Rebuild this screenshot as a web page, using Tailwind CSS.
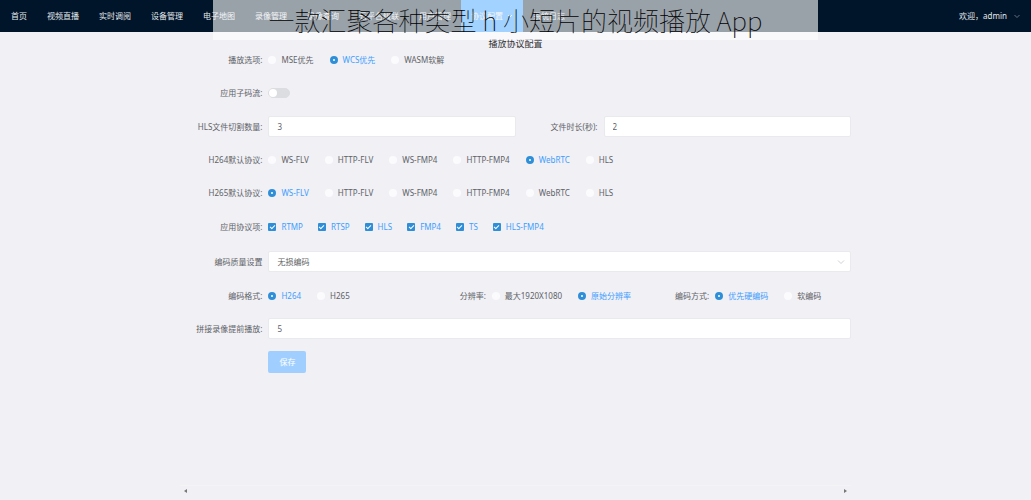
<!DOCTYPE html>
<html lang="zh-CN">
<head>
<meta charset="utf-8">
<meta name="viewport" content="width=device-width, initial-scale=1">
<title>播放协议配置</title>
<script src="https://cdn.jsdelivr.net/npm/@tailwindcss/browser@4"></script>
</head>
<body class="relative flex min-h-screen flex-col bg-[#f0f0f5] font-['Noto_Sans','Noto_Sans_CJK_SC',sans-serif] text-[8px] leading-3 text-[#606266]">
<header class="flex h-8 items-stretch justify-between bg-[#001529] text-[#e6e9ec]">
  <nav class="flex items-stretch pl-px">
    <a href="#" class="flex items-center px-[10px]">首页</a>
    <a href="#" class="flex items-center px-[10px]">视频直播</a>
    <a href="#" class="flex items-center px-[10px]">实时调阅</a>
    <a href="#" class="flex items-center px-[10px]">设备管理</a>
    <a href="#" class="flex items-center px-[10px]">电子地图</a>
    <a href="#" class="flex items-center px-[10px]">录像管理</a>
    <a href="#" class="flex items-center px-[10px]">录像查询</a>
    <a href="#" class="flex items-center px-[10px]">云平台级联</a>
    <a href="#" class="flex items-center px-[10px]">用户管理</a>
    <a href="#" class="flex items-center gap-1 bg-[#1890ff] px-[10px]">协议配置
      <svg class="size-[6px]" viewBox="0 0 6 6" fill="none" stroke="currentColor"><path d="M1 2l2 2 2-2"/></svg></a>
    <a href="#" class="flex items-center px-[10px]">系统日志</a>
  </nav>
  <button type="button" class="flex items-center gap-[7px] pr-[11px]">欢迎，admin
    <svg class="size-[6px] text-[#7d8893]" viewBox="0 0 6 6" fill="none" stroke="currentColor" stroke-width=".8"><path d="M.5 2L3 4.500l2.500-2.500"/></svg></button>
</header>

<main class="flex grow flex-col px-[17.5%] pt-1">
  <h1 class="h-4 text-center text-[9px] leading-4 text-[#303133]">播放协议配置</h1>
  <form class="flex flex-col">
    <div role="radiogroup" aria-label="播放选项" class="mb-[9px] flex h-[15px] items-center">
      <span class="mr-[6px] w-[82px] shrink-0 text-right">播放选项:</span>
      <div class="flex gap-4">
        <label class="flex items-center gap-[5px] has-checked:text-[#409eff]"><input type="radio" name="play" class="size-2 appearance-none rounded-full bg-[#fbfbfd] checked:border-[3px] checked:border-[#2f8ed8] checked:bg-white">MSE优先</label>
        <label class="flex items-center gap-[5px] has-checked:text-[#409eff]"><input type="radio" name="play" checked class="size-2 appearance-none rounded-full bg-[#fbfbfd] checked:border-[3px] checked:border-[#2f8ed8] checked:bg-white">WCS优先</label>
        <label class="flex items-center gap-[5px] has-checked:text-[#409eff]"><input type="radio" name="play" class="size-2 appearance-none rounded-full bg-[#fbfbfd] checked:border-[3px] checked:border-[#2f8ed8] checked:bg-white">WASM软解</label>
      </div>
    </div>
    <div class="flex h-[34px] items-center">
      <label for="sub" class="mr-[6px] w-[82px] shrink-0 text-right">应用子码流:</label>
      <input id="sub" type="checkbox" role="switch" class="h-[10px] w-[22px] appearance-none rounded-full border border-[#dcdde0] bg-[#dcdde0] before:block before:size-2 before:rounded-full before:bg-white">
    </div>
    <div class="flex h-[33px] items-center">
      <label for="cut" class="mr-[6px] w-[82px] shrink-0 text-right">HLS文件切割数量:</label>
      <input id="cut" value="3" class="h-[21px] min-w-0 flex-1 rounded-xs border border-[#e9eaee] bg-white px-2">
      <label for="dur" class="mr-[6px] w-[82px] shrink-0 text-right">文件时长(秒):</label>
      <input id="dur" value="2" class="h-[21px] min-w-0 flex-1 rounded-xs border border-[#e9eaee] bg-white px-2">
    </div>
    <div role="radiogroup" aria-label="H264默认协议" class="flex h-[33px] items-center">
      <span class="mr-[6px] w-[82px] shrink-0 text-right">H264默认协议:</span>
      <div class="flex gap-4">
        <label class="flex items-center gap-[5px] has-checked:text-[#409eff]"><input type="radio" name="p264" class="size-2 appearance-none rounded-full bg-[#fbfbfd] checked:border-[3px] checked:border-[#2f8ed8] checked:bg-white">WS-FLV</label>
        <label class="flex items-center gap-[5px] has-checked:text-[#409eff]"><input type="radio" name="p264" class="size-2 appearance-none rounded-full bg-[#fbfbfd] checked:border-[3px] checked:border-[#2f8ed8] checked:bg-white">HTTP-FLV</label>
        <label class="flex items-center gap-[5px] has-checked:text-[#409eff]"><input type="radio" name="p264" class="size-2 appearance-none rounded-full bg-[#fbfbfd] checked:border-[3px] checked:border-[#2f8ed8] checked:bg-white">WS-FMP4</label>
        <label class="flex items-center gap-[5px] has-checked:text-[#409eff]"><input type="radio" name="p264" class="size-2 appearance-none rounded-full bg-[#fbfbfd] checked:border-[3px] checked:border-[#2f8ed8] checked:bg-white">HTTP-FMP4</label>
        <label class="flex items-center gap-[5px] has-checked:text-[#409eff]"><input type="radio" name="p264" checked class="size-2 appearance-none rounded-full bg-[#fbfbfd] checked:border-[3px] checked:border-[#2f8ed8] checked:bg-white">WebRTC</label>
        <label class="flex items-center gap-[5px] has-checked:text-[#409eff]"><input type="radio" name="p264" class="size-2 appearance-none rounded-full bg-[#fbfbfd] checked:border-[3px] checked:border-[#2f8ed8] checked:bg-white">HLS</label>
      </div>
    </div>
    <div role="radiogroup" aria-label="H265默认协议" class="flex h-[34px] items-center">
      <span class="mr-[6px] w-[82px] shrink-0 text-right">H265默认协议:</span>
      <div class="flex gap-4">
        <label class="flex items-center gap-[5px] has-checked:text-[#409eff]"><input type="radio" name="p265" checked class="size-2 appearance-none rounded-full bg-[#fbfbfd] checked:border-[3px] checked:border-[#2f8ed8] checked:bg-white">WS-FLV</label>
        <label class="flex items-center gap-[5px] has-checked:text-[#409eff]"><input type="radio" name="p265" class="size-2 appearance-none rounded-full bg-[#fbfbfd] checked:border-[3px] checked:border-[#2f8ed8] checked:bg-white">HTTP-FLV</label>
        <label class="flex items-center gap-[5px] has-checked:text-[#409eff]"><input type="radio" name="p265" class="size-2 appearance-none rounded-full bg-[#fbfbfd] checked:border-[3px] checked:border-[#2f8ed8] checked:bg-white">WS-FMP4</label>
        <label class="flex items-center gap-[5px] has-checked:text-[#409eff]"><input type="radio" name="p265" class="size-2 appearance-none rounded-full bg-[#fbfbfd] checked:border-[3px] checked:border-[#2f8ed8] checked:bg-white">HTTP-FMP4</label>
        <label class="flex items-center gap-[5px] has-checked:text-[#409eff]"><input type="radio" name="p265" class="size-2 appearance-none rounded-full bg-[#fbfbfd] checked:border-[3px] checked:border-[#2f8ed8] checked:bg-white">WebRTC</label>
        <label class="flex items-center gap-[5px] has-checked:text-[#409eff]"><input type="radio" name="p265" class="size-2 appearance-none rounded-full bg-[#fbfbfd] checked:border-[3px] checked:border-[#2f8ed8] checked:bg-white">HLS</label>
      </div>
    </div>
    <div role="group" aria-label="应用协议项" class="flex h-[33px] items-center">
      <span class="mr-[6px] w-[82px] shrink-0 text-right">应用协议项:</span>
      <div class="flex gap-[15px] text-[#409eff]">
        <label class="flex items-center gap-[5px]"><input type="checkbox" checked class="size-2 appearance-none rounded-[1px] bg-white checked:bg-[#2f8ed8] before:mx-auto before:mt-px before:block before:h-[5px] before:w-[3px] before:rotate-45 before:border-r before:border-b before:border-white">RTMP</label>
        <label class="flex items-center gap-[5px]"><input type="checkbox" checked class="size-2 appearance-none rounded-[1px] bg-white checked:bg-[#2f8ed8] before:mx-auto before:mt-px before:block before:h-[5px] before:w-[3px] before:rotate-45 before:border-r before:border-b before:border-white">RTSP</label>
        <label class="flex items-center gap-[5px]"><input type="checkbox" checked class="size-2 appearance-none rounded-[1px] bg-white checked:bg-[#2f8ed8] before:mx-auto before:mt-px before:block before:h-[5px] before:w-[3px] before:rotate-45 before:border-r before:border-b before:border-white">HLS</label>
        <label class="flex items-center gap-[5px]"><input type="checkbox" checked class="size-2 appearance-none rounded-[1px] bg-white checked:bg-[#2f8ed8] before:mx-auto before:mt-px before:block before:h-[5px] before:w-[3px] before:rotate-45 before:border-r before:border-b before:border-white">FMP4</label>
        <label class="flex items-center gap-[5px]"><input type="checkbox" checked class="size-2 appearance-none rounded-[1px] bg-white checked:bg-[#2f8ed8] before:mx-auto before:mt-px before:block before:h-[5px] before:w-[3px] before:rotate-45 before:border-r before:border-b before:border-white">TS</label>
        <label class="flex items-center gap-[5px]"><input type="checkbox" checked class="size-2 appearance-none rounded-[1px] bg-white checked:bg-[#2f8ed8] before:mx-auto before:mt-px before:block before:h-[5px] before:w-[3px] before:rotate-45 before:border-r before:border-b before:border-white">HLS-FMP4</label>
      </div>
    </div>
    <div class="flex h-[37px] items-center">
      <label for="quality" class="mr-[6px] w-[82px] shrink-0 text-right">编码质量设置</label>
      <div class="relative min-w-0 flex-1">
        <select id="quality" class="block h-[21px] w-full appearance-none rounded-xs border border-[#e9eaee] bg-white px-2"><option>无损编码</option></select>
        <svg class="pointer-events-none absolute top-[7px] right-[6px] size-2 text-[#c0c4cc]" viewBox="0 0 8 8" fill="none" stroke="currentColor" stroke-width=".8"><path d="M1 2.500l3 3 3-3"/></svg>
      </div>
    </div>
    <div class="grid h-8 grid-cols-3 items-center whitespace-nowrap">
      <div role="radiogroup" aria-label="编码格式" class="flex items-center">
        <span class="mr-[6px] w-[82px] shrink-0 text-right">编码格式:</span>
        <div class="flex gap-4">
          <label class="flex items-center gap-[5px] has-checked:text-[#409eff]"><input type="radio" name="fmt" checked class="size-2 appearance-none rounded-full bg-[#fbfbfd] checked:border-[3px] checked:border-[#2f8ed8] checked:bg-white">H264</label>
          <label class="flex items-center gap-[5px] has-checked:text-[#409eff]"><input type="radio" name="fmt" class="size-2 appearance-none rounded-full bg-[#fbfbfd] checked:border-[3px] checked:border-[#2f8ed8] checked:bg-white">H265</label>
        </div>
      </div>
      <div role="radiogroup" aria-label="分辨率" class="flex items-center">
        <span class="mr-[6px] w-[82px] shrink-0 text-right">分辨率:</span>
        <div class="flex gap-4">
          <label class="flex items-center gap-[5px] has-checked:text-[#409eff]"><input type="radio" name="res" class="size-2 appearance-none rounded-full bg-[#fbfbfd] checked:border-[3px] checked:border-[#2f8ed8] checked:bg-white">最大1920X1080</label>
          <label class="flex items-center gap-[5px] has-checked:text-[#409eff]"><input type="radio" name="res" checked class="size-2 appearance-none rounded-full bg-[#fbfbfd] checked:border-[3px] checked:border-[#2f8ed8] checked:bg-white">原始分辨率</label>
        </div>
      </div>
      <div role="radiogroup" aria-label="编码方式" class="flex items-center">
        <span class="mr-[6px] w-[82px] shrink-0 text-right">编码方式:</span>
        <div class="flex gap-4">
          <label class="flex items-center gap-[5px] has-checked:text-[#409eff]"><input type="radio" name="mode" checked class="size-2 appearance-none rounded-full bg-[#fbfbfd] checked:border-[3px] checked:border-[#2f8ed8] checked:bg-white">优先硬编码</label>
          <label class="flex items-center gap-[5px] has-checked:text-[#409eff]"><input type="radio" name="mode" class="size-2 appearance-none rounded-full bg-[#fbfbfd] checked:border-[3px] checked:border-[#2f8ed8] checked:bg-white">软编码</label>
        </div>
      </div>
    </div>
    <div class="flex h-[33px] items-center">
      <label for="ahead" class="mr-[6px] w-[82px] shrink-0 text-right">拼接录像提前播放:</label>
      <input id="ahead" value="5" class="h-[21px] min-w-0 flex-1 rounded-xs border border-[#e9eaee] bg-white px-2">
    </div>
    <div class="flex h-[34px] items-center pl-[88px]">
      <button type="button" class="h-[22px] w-[38px] rounded-xs bg-[#a0cfff] text-white">保存</button>
    </div>
  </form>
</main>

<div class="mx-[17.5%] mb-[5px] flex h-[10px] items-center justify-between border-t border-[#f4f4f6] px-1">
  <svg class="h-1 w-[3px]" viewBox="0 0 3 4" fill="#777"><path d="M3 0v4L0 2z"/></svg>
  <svg class="h-1 w-[3px]" viewBox="0 0 3 4" fill="#777"><path d="M0 0v4l3-2z"/></svg>
</div>

<div class="pointer-events-none absolute inset-x-0 top-0 mx-auto flex h-10 w-[605px] max-w-full items-center justify-center bg-white/60 font-['Noto_Sans_CJK_SC',sans-serif] text-[26px] leading-10 font-thin whitespace-nowrap text-black">一款汇聚各种类型 h 小短片的视频播放 App</div>
</body>
</html>
